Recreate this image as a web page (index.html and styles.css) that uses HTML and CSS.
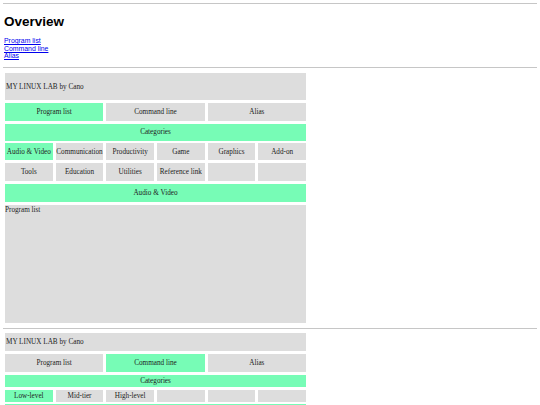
FILE: index.html
```html
<!DOCTYPE html>
<html lang="en">
<head>
<meta charset="utf-8">
<title>Overview</title>
<link rel="stylesheet" href="styles.css">
</head>
<body>
<hr class="rule rule--top">
<h2 class="title">Overview</h2>
<nav class="toc">
  <a href="#program-list">Program list</a>
  <a href="#command-line">Command line</a>
  <a href="#alias">Alias</a>
</nav>
<hr class="rule rule--mid">

<section class="lab lab--programs" id="program-list">
  <div class="cell cell--wide cell--brand">MY LINUX LAB by Cano</div>
  <div class="cell cell--tab is-active">Program list</div>
  <div class="cell cell--tab">Command line</div>
  <div class="cell cell--tab">Alias</div>
  <div class="cell cell--wide is-active">Categories</div>
  <div class="cell is-active">Audio &amp; Video</div>
  <div class="cell">Communication</div>
  <div class="cell">Productivity</div>
  <div class="cell">Game</div>
  <div class="cell">Graphics</div>
  <div class="cell">Add-on</div>
  <div class="cell">Tools</div>
  <div class="cell">Education</div>
  <div class="cell">Utilities</div>
  <div class="cell">Reference link</div>
  <div class="cell"></div>
  <div class="cell"></div>
  <div class="cell cell--wide is-active">Audio &amp; Video</div>
  <div class="cell cell--wide cell--content">Program list</div>
</section>

<hr class="rule rule--between">

<section class="lab lab--commands" id="command-line">
  <div class="cell cell--wide cell--brand">MY LINUX LAB by Cano</div>
  <div class="cell cell--tab">Program list</div>
  <div class="cell cell--tab is-active">Command line</div>
  <div class="cell cell--tab">Alias</div>
  <div class="cell cell--wide is-active">Categories</div>
  <div class="cell is-active">Low-level</div>
  <div class="cell">Mid-tier</div>
  <div class="cell">High-level</div>
  <div class="cell"></div>
  <div class="cell"></div>
  <div class="cell"></div>
  <div class="cell cell--wide is-active"></div>
  <div class="cell cell--wide cell--content"></div>
</section>
</body>
</html>
```

FILE: styles.css
```css
html, body {
  margin: 0;
  padding: 0;
  background: #ffffff;
}

body {
  padding: 3px 3px 0 3px;
  font-family: "Liberation Serif", "Times New Roman", serif;
  overflow: hidden;
}

.rule {
  border: 0;
  border-top: 1px solid #c6c6c6;
  height: 0;
  margin: 0;
}

.rule--mid {
  margin: 7.5px 0 5px 0;
}

.rule--between {
  margin: 5.5px 0 4px 0;
}

.title {
  font-family: "Liberation Sans", Arial, sans-serif;
  font-weight: bold;
  font-size: 13.5px;
  line-height: 15.5px;
  margin: 9.5px 0 0 1px;
  color: #000;
}

.toc {
  display: flex;
  flex-direction: column;
  margin: 8px 0 0 1px;
  font-family: "Liberation Sans", Arial, sans-serif;
  font-size: 6.9px;
  line-height: 7.5px;
}

.toc a {
  color: #0000ee;
  text-decoration: underline;
}

.lab {
  display: grid;
  grid-template-columns: repeat(6, 1fr);
  column-gap: 3px;
  row-gap: 2.8px;
  width: 301px;
  margin-left: 2px;
  font-size: 7.2px;
  color: #222222;
}

.lab--programs {
  grid-template-rows: 27px 18px 17px 17px 18px 18px 118px;
}

.lab--commands {
  grid-template-rows: 18px 18px 12px 12px 18px 118px;
}

.cell {
  background: #dddddd;
  display: flex;
  align-items: center;
  justify-content: center;
  white-space: nowrap;
  overflow: hidden;
}

.cell--wide {
  grid-column: span 6;
}

.cell--tab {
  grid-column: span 2;
}

.cell--brand {
  justify-content: flex-start;
  padding-left: 1px;
}

.cell--content {
  align-items: flex-start;
  justify-content: flex-start;
  padding-top: 1px;
}

.is-active {
  background: #77fcb6;
}
```
